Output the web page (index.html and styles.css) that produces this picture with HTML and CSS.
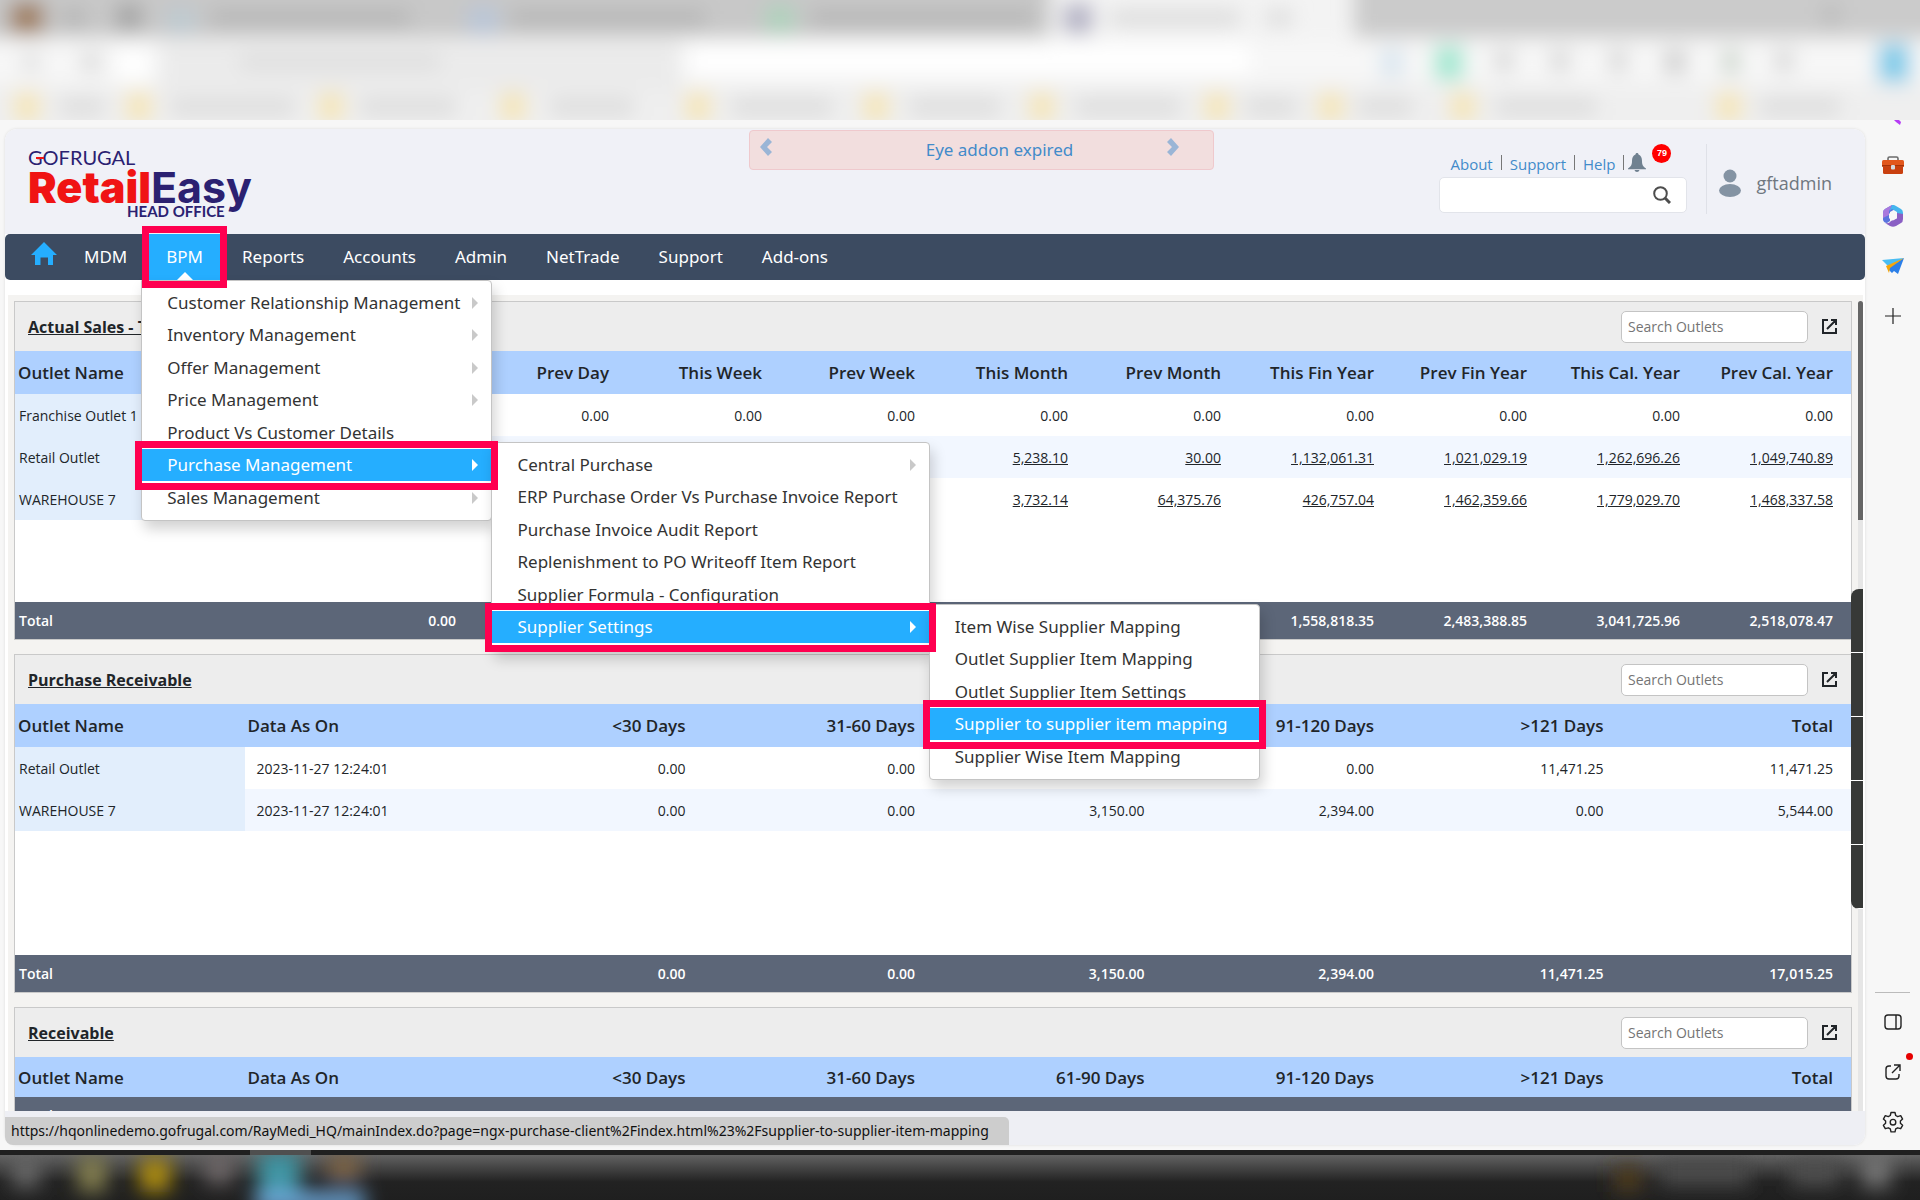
FILE: index.html
```html
<!DOCTYPE html>
<html lang="en">
<head>
  <meta charset="UTF-8" />
  <meta name="viewport" content="width=device-width, initial-scale=1" />
  <title>GOFRUGAL RetailEasy Head Office</title>
  <link rel="stylesheet" href="styles.css">
</head>
<body>
  <!-- browser toolbar, blurred out -->
  <svg class="browser-top" viewBox="0 0 1920 120" preserveAspectRatio="none" aria-hidden="true">
    <defs>
      <filter id="soft" x="-5%" y="-50%" width="110%" height="200%" filterUnits="objectBoundingBox">
        <feGaussianBlur stdDeviation="10" />
      </filter>
    </defs>
    <rect width="1920" height="120" fill="#f3f3f3" />
    <g filter="url(#soft)">
      <rect x="-60" y="-60" width="1110" height="98" fill="#c8c8c8" />
      <rect x="1354" y="-60" width="640" height="98" fill="#cbcbcb" />
      <rect x="-60" y="40" width="2060" height="42" fill="#f7f7f7" />
      <rect x="-60" y="84" width="2060" height="90" fill="#efefef" />
      <g fill="#b6b6b6">
        <rect x="210" y="10" width="200" height="16" />
        <rect x="510" y="10" width="195" height="16" />
        <rect x="810" y="10" width="225" height="16" />
        <rect x="62" y="8" width="24" height="20" />
        <rect x="116" y="4" width="26" height="26" fill="#a4a4a4" />
        <rect x="1824" y="6" width="14" height="18" />
      </g>
      <rect x="10" y="2" width="34" height="32" fill="#a07f60" />
      <rect x="168" y="8" width="26" height="24" fill="#bccad2" />
      <rect x="468" y="6" width="30" height="28" fill="#b9c6d8" />
      <rect x="765" y="4" width="30" height="30" fill="#b0d2bd" />
      <rect x="1064" y="4" width="28" height="30" fill="#b4b2c4" />
      <rect x="1110" y="10" width="130" height="16" fill="#dcdcdc" />
      <rect x="1266" y="10" width="26" height="16" fill="#dcdcdc" />
      <rect x="160" y="42" width="520" height="50" fill="#ebebeb" />
      <rect x="240" y="54" width="200" height="16" fill="#dedede" />
      <rect x="20" y="52" width="22" height="20" fill="#e3e3e3" />
      <rect x="80" y="52" width="22" height="20" fill="#dddddd" />
      <rect x="118" y="48" width="30" height="34" fill="#ffffff" />
      <rect x="690" y="44" width="560" height="30" fill="#ffffff" />
      <rect x="1380" y="48" width="24" height="30" fill="#dbe7f0" />
      <rect x="1434" y="46" width="30" height="34" fill="#a3e8d2" />
      <g fill="#d9d9d9">
        <rect x="1494" y="50" width="20" height="22" />
        <rect x="1550" y="50" width="20" height="22" />
        <rect x="1608" y="50" width="20" height="22" />
        <rect x="1664" y="50" width="22" height="24" fill="#cecece" />
        <rect x="1722" y="50" width="18" height="24" fill="#ccd6cc" />
        <rect x="1774" y="50" width="20" height="22" />
      </g>
      <rect x="1878" y="44" width="32" height="38" fill="#7dcbe9" />
      <g fill="#dddddd">
        <rect x="60" y="98" width="44" height="18" />
        <rect x="170" y="98" width="125" height="18" />
        <rect x="360" y="98" width="96" height="18" />
        <rect x="550" y="98" width="84" height="18" />
        <rect x="732" y="98" width="100" height="18" />
        <rect x="910" y="98" width="90" height="18" />
        <rect x="1076" y="98" width="104" height="18" />
        <rect x="1246" y="98" width="50" height="18" />
        <rect x="1358" y="98" width="54" height="18" />
        <rect x="1496" y="98" width="100" height="18" />
        <rect x="1760" y="98" width="80" height="18" />
      </g>
      <g fill="#f5e6b8">
        <rect x="14" y="92" width="26" height="30" />
        <rect x="126" y="92" width="26" height="30" />
        <rect x="318" y="92" width="26" height="30" />
        <rect x="500" y="92" width="26" height="30" />
        <rect x="685" y="92" width="26" height="30" />
        <rect x="863" y="92" width="26" height="30" />
        <rect x="1029" y="92" width="26" height="30" />
        <rect x="1204" y="92" width="26" height="30" />
        <rect x="1318" y="92" width="26" height="30" />
        <rect x="1450" y="92" width="26" height="30" />
        <rect x="1716" y="92" width="26" height="30" />
      </g>
    </g>
  </svg>

  <div class="window">
    <div class="app">
      <header class="header">
        <div class="logo">
          <span class="logo-top">GOFRUGAL</span>
          <span class="logo-main"><b>Retail</b>Easy</span>
          <span class="logo-sub">HEAD OFFICE</span>
        </div>
        <div class="alert">
          <button aria-label="Previous"><svg width="12" height="18" viewBox="0 0 12 18"><path d="M8 0l4 4-5 5 5 5-4 4-8-9z" fill="#9ab5d6" /></svg></button>
          <a href="#">Eye addon expired</a>
          <button aria-label="Next"><svg width="12" height="18" viewBox="0 0 12 18"><path d="M4 0L0 4l5 5-5 5 4 4 8-9z" fill="#9ab5d6" /></svg></button>
        </div>
        <div class="tools">
          <div class="tools-main">
            <div class="links">
              <a href="#">About</a>
              <a href="#">Support</a>
              <a href="#">Help</a>
              <button class="bell" aria-label="Notifications">
                <svg width="18" height="19" viewBox="0 0 18 19" fill="#708190"><path d="M9 0c1 0 1.500 .7 1.500 1.500C13 2.500 14 5 14 8c0 4 1 5.500 4 7.500v.8H0v-.8C3 13.500 4 12 4 8c0-3 1-5.500 3.500-6.500C7.500 .7 8 0 9 0zM6.500 17h5c-.4 1.200-1.300 2-2.500 2s-2.100-.8-2.500-2z" /></svg>
                <span class="badge">79</span>
              </button>
            </div>
            <div class="search">
              <input type="text" aria-label="Search">
              <svg width="18" height="18" viewBox="0 0 18 18" fill="none" stroke="#4d4d4d"><circle cx="7.500" cy="7.500" r="6.300" stroke-width="2" /><path d="M12 12l5 5" stroke-width="3" /></svg>
            </div>
          </div>
          <div class="user">
            <svg width="22" height="28" viewBox="0 0 22 28" fill="#8493a3"><circle cx="11" cy="7" r="6.500" /><ellipse cx="11" cy="21.500" rx="11" ry="6.500" /></svg>
            <span>gftadmin</span>
          </div>
        </div>
      </header>

      <nav>
        <ul class="nav">
          <li class="home"><a href="#" aria-label="Home"><svg width="26" height="24" viewBox="0 0 26 24" fill="#25aeff"><path d="M13 0l13 13h-4v10h-5v-7.500H9.500V23H4V13H0z" /></svg></a></li>
          <li><a href="#">MDM</a></li>
          <li class="active"><a href="#">BPM</a>
            <ul class="menu">
              <li class="more"><a href="#">Customer Relationship Management</a></li>
              <li class="more"><a href="#">Inventory Management</a></li>
              <li class="more"><a href="#">Offer Management</a></li>
              <li class="more"><a href="#">Price Management</a></li>
              <li><a href="#">Product Vs Customer Details</a></li>
              <li class="more active"><a href="#">Purchase Management</a>
                <ul class="menu">
                  <li class="more"><a href="#">Central Purchase</a></li>
                  <li><a href="#">ERP Purchase Order Vs Purchase Invoice Report</a></li>
                  <li><a href="#">Purchase Invoice Audit Report</a></li>
                  <li><a href="#">Replenishment to PO Writeoff Item Report</a></li>
                  <li><a href="#">Supplier Formula - Configuration</a></li>
                  <li class="more active"><a href="#">Supplier Settings</a>
                    <ul class="menu">
                      <li><a href="#">Item Wise Supplier Mapping</a></li>
                      <li><a href="#">Outlet Supplier Item Mapping</a></li>
                      <li><a href="#">Outlet Supplier Item Settings</a></li>
                      <li class="active"><a href="#">Supplier to supplier item mapping</a></li>
                      <li><a href="#">Supplier Wise Item Mapping</a></li>
                    </ul>
                  </li>
                </ul>
              </li>
              <li class="more"><a href="#">Sales Management</a></li>
            </ul>
          </li>
          <li><a href="#">Reports</a></li>
          <li><a href="#">Accounts</a></li>
          <li><a href="#">Admin</a></li>
          <li><a href="#">NetTrade</a></li>
          <li><a href="#">Support</a></li>
          <li><a href="#">Add-ons</a></li>
        </ul>
      </nav>

      <main class="content">
        <div class="panels">
          <section class="panel">
            <div class="panel-head">
              <h2>Actual Sales - Today</h2>
              <input type="text" placeholder="Search Outlets" aria-label="Search Outlets">
              <button aria-label="Open"><svg width="15" height="15" viewBox="0 0 15 15" fill="none" stroke="#212529" stroke-width="2"><path d="M6 1H1v13h13V9M9 1h5v5M14 1L5 10" /></svg></button>
            </div>
            <table class="tall">
              <thead>
                <tr><th>Outlet Name</th><th>Data As On</th><th>Today</th><th>Prev Day</th><th>This Week</th><th>Prev Week</th><th>This Month</th><th>Prev Month</th><th>This Fin Year</th><th>Prev Fin Year</th><th>This Cal. Year</th><th>Prev Cal. Year</th></tr>
              </thead>
              <tbody>
                <tr><td>Franchise Outlet 1</td><td></td><td>0.00</td><td>0.00</td><td>0.00</td><td>0.00</td><td>0.00</td><td>0.00</td><td>0.00</td><td>0.00</td><td>0.00</td><td>0.00</td></tr>
                <tr><td>Retail Outlet</td><td></td><td>0.00</td><td>0.00</td><td>0.00</td><td>0.00</td><td><a href="#">5,238.10</a></td><td><a href="#">30.00</a></td><td><a href="#">1,132,061.31</a></td><td><a href="#">1,021,029.19</a></td><td><a href="#">1,262,696.26</a></td><td><a href="#">1,049,740.89</a></td></tr>
                <tr><td>WAREHOUSE 7</td><td></td><td>0.00</td><td>0.00</td><td>0.00</td><td>0.00</td><td><a href="#">3,732.14</a></td><td><a href="#">64,375.76</a></td><td><a href="#">426,757.04</a></td><td><a href="#">1,462,359.66</a></td><td><a href="#">1,779,029.70</a></td><td><a href="#">1,468,337.58</a></td></tr>
                <tr class="filler"><td colspan="12"></td></tr>
              </tbody>
              <tfoot>
                <tr><td>Total</td><td></td><td>0.00</td><td>0.00</td><td>0.00</td><td>0.00</td><td>8,970.24</td><td>64,405.76</td><td>1,558,818.35</td><td>2,483,388.85</td><td>3,041,725.96</td><td>2,518,078.47</td></tr>
              </tfoot>
            </table>
          </section>

          <section class="panel">
            <div class="panel-head">
              <h2>Purchase Receivable</h2>
              <input type="text" placeholder="Search Outlets" aria-label="Search Outlets">
              <button aria-label="Open"><svg width="15" height="15" viewBox="0 0 15 15" fill="none" stroke="#212529" stroke-width="2"><path d="M6 1H1v13h13V9M9 1h5v5M14 1L5 10" /></svg></button>
            </div>
            <table class="tall">
              <thead>
                <tr><th>Outlet Name</th><th>Data As On</th><th>&lt;30 Days</th><th>31-60 Days</th><th>61-90 Days</th><th>91-120 Days</th><th>&gt;121 Days</th><th>Total</th></tr>
              </thead>
              <tbody>
                <tr><td>Retail Outlet</td><td>2023-11-27 12:24:01</td><td>0.00</td><td>0.00</td><td>0.00</td><td>0.00</td><td>11,471.25</td><td>11,471.25</td></tr>
                <tr><td>WAREHOUSE 7</td><td>2023-11-27 12:24:01</td><td>0.00</td><td>0.00</td><td>3,150.00</td><td>2,394.00</td><td>0.00</td><td>5,544.00</td></tr>
                <tr class="filler"><td colspan="8"></td></tr>
              </tbody>
              <tfoot>
                <tr><td>Total</td><td></td><td>0.00</td><td>0.00</td><td>3,150.00</td><td>2,394.00</td><td>11,471.25</td><td>17,015.25</td></tr>
              </tfoot>
            </table>
          </section>

          <section class="panel">
            <div class="panel-head">
              <h2>Receivable</h2>
              <input type="text" placeholder="Search Outlets" aria-label="Search Outlets">
              <button aria-label="Open"><svg width="15" height="15" viewBox="0 0 15 15" fill="none" stroke="#212529" stroke-width="2"><path d="M6 1H1v13h13V9M9 1h5v5M14 1L5 10" /></svg></button>
            </div>
            <table>
              <thead>
                <tr><th>Outlet Name</th><th>Data As On</th><th>&lt;30 Days</th><th>31-60 Days</th><th>61-90 Days</th><th>91-120 Days</th><th>&gt;121 Days</th><th>Total</th></tr>
              </thead>
              <tfoot>
                <tr><td>Total</td><td></td><td>497.00</td><td>0.00</td><td>22,217.00</td><td>2,239.00</td><td>479,224.00</td><td>310,968.23</td></tr>
              </tfoot>
            </table>
          </section>
        </div>
        <div class="scrollbar"></div>
      </main>
      <div class="side-tabs"><i></i><i></i><i></i><i></i><i></i></div>

      <footer class="footer">
        <div class="status">https://hqonlinedemo.gofrugal.com/RayMedi_HQ/mainIndex.do?page=ngx-purchase-client%2Findex.html%23%2Fsupplier-to-supplier-item-mapping</div>
      </footer>
    </div>

    <aside class="sidebar">
      <svg width="22" height="5" viewBox="0 0 22 5"><path d="M12 0h5l2 2-1 3-4-3z" fill="#b63cf5" /></svg>
      <button aria-label="Tools"><svg width="24" height="20" viewBox="0 0 24 20"><path d="M7 5V2.500Q7 1 8.500 1h7Q17 1 17 2.500V5" fill="none" stroke="#6b6b6b" stroke-width="1.600" /><rect x="2" y="9" width="20" height="9" rx="1.500" fill="#c9400f" /><rect x="1" y="4" width="22" height="7" rx="1.500" fill="#e2571c" /><path d="M1 9h22v1.500H1z" fill="#a83208" /><rect x="10" y="9" width="4" height="4.500" rx="1" fill="#d5dbe0" /></svg></button>
      <button aria-label="Microsoft 365"><svg width="22" height="22" viewBox="0 0 22 22"><path d="M10 0L3 4Q1 5 1 8v7q1 3 4 3l3-2V7l7-4z" fill="#5b74de" /><path d="M10 0q2-.5 4 1l5 3q2 1 2 4v6l-6-4V7l-5-3-3 2z" fill="#45b5ee" /><path d="M10 0L3 4Q1 5 1 8v5l6-3V6z" fill="#a979dd" /><path d="M21 9v5q0 3-2 4l-5 3q-3 1.500-6 0l-5-3q4 1 6-2l6-3V8z" fill="#8a5fc4" /><path d="M11 6.500l4 2.200v4.600l-4 2.200-4-2.200V8.700z" fill="#f7f7f7" /></svg></button>
      <button aria-label="Drop"><svg width="22" height="16" viewBox="0 0 22 16"><path d="M0 2L22 0 7 9z" fill="#49bdf3" /><path d="M22 0L16 16l-4-3-2 2-3-3V9z" fill="#2b7fe8" /><path d="M22 0L4 8l3 7 1-5z" fill="#f5a60a" /></svg></button>
      <button aria-label="Add"><svg width="16" height="16" viewBox="0 0 16 16" stroke="#222" stroke-width="1.200"><path d="M8 0v16M0 8h16" /></svg></button>
      <hr>
      <button aria-label="Split"><svg width="18" height="16" viewBox="0 0 18 16" fill="none" stroke="#222" stroke-width="1.400"><rect x="1" y="1" width="16" height="14" rx="3" /><path d="M12 1v14" /></svg></button>
      <button class="dot" aria-label="Open externally"><svg width="16" height="16" viewBox="0 0 16 16" fill="none" stroke="#222" stroke-width="1.400"><path d="M6 2H4Q1 2 1 5v7q0 3 3 3h7q3 0 3-3v-2M9 1h6v6M15 1L7 9" /></svg></button>
      <button aria-label="Settings"><svg width="22" height="22" viewBox="0 0 22 22" fill="none" stroke="#222" stroke-width="1.400" stroke-linejoin="round"><path d="M9 1.500h4l.7 3 2 1.100 3-.9 1.900 3.400-2.200 2v2.200l2.200 2-1.900 3.400-3-.9-2 1.100-.7 3H9l-.7-3-2-1.100-3 .9-1.900-3.400 2.200-2v-2.200l-2.200-2 1.900-3.400 3 .9 2-1.100z" /><circle cx="11" cy="11.200" r="2.800" /></svg></button>
    </aside>
  </div>

  <!-- system taskbar, blurred out -->
  <svg class="taskbar" viewBox="0 0 1920 50" preserveAspectRatio="none" aria-hidden="true">
    <defs>
      <linearGradient id="bar" x1="0" y1="0" x2="0" y2="1">
        <stop offset="0" stop-color="#626262" />
        <stop offset=".6" stop-color="#222222" />
        <stop offset="1" stop-color="#1f1f1f" />
      </linearGradient>
      <clipPath id="strip"><rect y="5" width="1920" height="45" /></clipPath>
    </defs>
    <rect width="1920" height="5" fill="#202020" />
    <rect x="250" width="61" height="5" fill="#4f4f4f" />
    <rect y="5" width="1920" height="45" fill="url(#bar)" />
    <g clip-path="url(#strip)"><g filter="url(#soft)">
      <rect x="12" y="4" width="28" height="34" fill="#666666" />
      <rect x="78" y="6" width="28" height="36" fill="#85804f" />
      <rect x="140" y="8" width="30" height="34" fill="#b08f10" />
      <rect x="205" y="2" width="28" height="32" fill="#6d6668" />
      <rect x="258" y="2" width="42" height="42" fill="#3f96a5" />
      <rect x="328" y="4" width="32" height="26" fill="#7f6546" />
      <rect x="255" y="42" width="110" height="20" fill="#6ea9dc" />
      <rect x="1614" y="16" width="28" height="26" fill="#4f3d22" />
      <rect x="1660" y="10" width="90" height="26" fill="#4b4b4b" />
      <rect x="1790" y="10" width="50" height="26" fill="#505050" />
      <rect x="1862" y="4" width="28" height="34" fill="#777777" />
    </g></g>
  </svg>
</body>
</html>
```
FILE: styles.css
```css
* {
  box-sizing: border-box;
}

body {
  margin: 0;
  height: 100vh;
  display: flex;
  flex-direction: column;
  overflow: hidden;
  background: #f7f7f7;
  font-family: "Open Sans", "Noto Sans", sans-serif;
  font-size: 14px;
  color: #212529;
}

button {
  display: flex;
  padding: 0;
  border: none;
  background: none;
  cursor: pointer;
}

a {
  color: inherit;
  text-decoration: none;
}

ul {
  margin: 0;
  padding: 0;
  list-style: none;
}

.browser-top {
  flex: none;
  width: 100%;
  height: 120px;
}

.taskbar {
  flex: none;
  width: 100%;
  height: 50px;
}

.window {
  flex: 1;
  min-height: 0;
  display: flex;
}

.app {
  position: relative;
  flex: 1;
  min-width: 0;
  margin: 9px 0 5px 5px;
  display: flex;
  flex-direction: column;
  background: #fff;
  border-radius: 12px;
  box-shadow: 0 0 2px 1px #e9e9e9;
}

/* header */
.header {
  height: 105px;
  flex: none;
  display: flex;
  align-items: flex-start;
  background: #f0f1f7;
  border-radius: 12px 12px 0 0;
}

.logo {
  flex: 0 0 40%;
  display: flex;
  flex-direction: column;
  padding: 18px 0 0 23px;
  color: #2b2171;
}

.logo-top {
  position: relative;
  font: 400 20px/20px Lato, sans-serif;
}

/* red bar of the G */
.logo-top::after {
  content: "";
  position: absolute;
  left: 8px;
  top: 10px;
  width: 8px;
  height: 2px;
  background: #f01414;
}

.logo-main {
  font: 700 43px/40px Inter, sans-serif;
}

.logo-main b {
  color: #f01414;
}

.logo-sub {
  padding-left: 99px;
  font: 700 15px/9px Lato, sans-serif;
}

.alert {
  flex: 0 0 25%;
  display: flex;
  align-items: flex-start;
  justify-content: space-between;
  height: 40px;
  margin-top: 1px;
  padding: 7px 34px 0 10px;
  border: 1px solid #efc9cd;
  border-radius: 4px;
  background: #f2dede;
}

.alert a {
  padding-left: 60px;
  font-family: "Noto Sans", sans-serif;
  font-size: 17px;
  line-height: 24px;
  color: #428bca;
}

.tools {
  flex: 1;
  display: flex;
  justify-content: flex-end;
  padding: 15px 33px 0 0;
}

.tools-main {
  width: 248px;
  padding-top: 11px;
}

.links {
  display: flex;
  height: 22px;
  padding-left: 11px;
}

.links a {
  height: 15px;
  padding-right: 8px;
  margin-right: 8px;
  border-right: 1px solid #777;
  font-size: 15px;
  line-height: 18px;
  color: #428bca;
}

.links .bell {
  position: relative;
  margin-left: -4px;
  margin-top: -2px;
}

.badge {
  position: absolute;
  left: 24px;
  top: -9px;
  width: 19px;
  border-radius: 50%;
  background: #f00;
  color: #fff;
  font-size: 9px;
  font-weight: 700;
  line-height: 19px;
  text-align: center;
}

.search {
  display: flex;
  align-items: center;
  height: 36px;
  padding-right: 15px;
  background: #fff;
  border: 1px solid #e2e4ea;
  border-radius: 5px;
}

.search input {
  flex: 1;
  min-width: 0;
  border: none;
  background: none;
}

.user {
  display: flex;
  align-items: center;
  gap: 15px;
  height: 70px;
  margin-left: 19px;
  padding: 8px 0 0 12px;
  border-left: 1px solid #dfe1e8;
  font-size: 18px;
  color: #6f7780;
}

/* navigation */
.nav {
  display: flex;
  height: 46px;
  padding-left: 24px;
  background: #3c4b61;
  border-radius: 5px;
  font-family: "Noto Sans", sans-serif;
}

.nav > li {
  position: relative;
  margin: 0 3px 0 2px;
}

.nav > li > a {
  display: block;
  padding: 0 17px;
  font-size: 17px;
  line-height: 45px;
  color: #fff;
}

.nav > .home > a {
  padding: 0 5px 0 0;
}

.home svg {
  margin-top: 8px;
  vertical-align: top;
}

.nav > .active {
  background: #25aeff;
}

/* pointer under the open tab */
.nav > .active > a::after {
  content: "";
  position: absolute;
  left: 50%;
  bottom: 0;
  margin-left: -8px;
  border: 8px solid transparent;
  border-top: none;
  border-bottom-color: #fff;
}

.menu {
  position: absolute;
  z-index: 2;
  top: -7px;
  left: 100%;
  padding: 6px 0;
  background: #fff;
  border: 1px solid #c4c4c4;
  border-radius: 0 4px 4px 4px;
  box-shadow: 3px 8px 14px rgba(0, 0, 0, 0.18);
  white-space: nowrap;
}

.nav > li > .menu {
  top: 46px;
  left: -8px;
}

.menu li {
  position: relative;
}

.menu li:nth-child(even) {
  padding-bottom: 1px;
}

.menu a {
  display: block;
  padding: 0 31px 0 25px;
  font-size: 17px;
  line-height: 32px;
  color: #333;
}

.menu .more > a::after {
  content: "";
  position: absolute;
  right: 13px;
  top: 10px;
  border: 6px solid transparent;
  border-right: none;
  border-left-color: #c9c9c9;
}

.menu .active > a {
  background: #25aeff;
  color: #fff;
}

.menu .active.more > a::after {
  border-left-color: #fff;
}

/* highlight frames */
.nav .active::after {
  content: "";
  position: absolute;
  z-index: 3;
  inset: -8px -7px;
  border: 7px solid #ff0050;
  pointer-events: none;
}

/* dashboard */
.content {
  flex: 1;
  min-height: 0;
  display: flex;
  gap: 6px;
  overflow: hidden;
  margin: 15px 2px 0 3px;
  padding: 6px 0 0 6px;
  background: #f4f3f1;
}

.panels {
  flex: 1;
}

.scrollbar {
  width: 5px;
  background: linear-gradient(#666 219px, #e6e6e6 219px);
  border-radius: 3px 3px 0 0;
}

.side-tabs {
  position: absolute;
  right: 2px;
  top: 460px;
  width: 12px;
  overflow: hidden;
  border-radius: 8px 0 0 8px;
}

.side-tabs i {
  display: block;
  height: 64px;
  background: #373937;
  border-bottom: 1px solid #fff;
}

.panel {
  margin-bottom: 14px;
  border: 1px solid #c9c9c9;
}

.panel-head {
  display: flex;
  align-items: center;
  height: 49px;
  padding: 0 14px 0 13px;
  background: #ededed;
}

.panel-head h2 {
  margin: 0 auto 0 0;
  font-size: 16px;
  font-weight: 700;
  line-height: 24px;
  text-decoration: underline;
}

.panel-head input {
  width: 187px;
  height: 32px;
  margin-right: 14px;
  padding: 0 6px;
  border: 1px solid #c4c4c4;
  border-radius: 5px;
  background: #fff;
  font: 14px "Open Sans", sans-serif;
}

.panel-head input::placeholder {
  color: #757575;
}

table {
  width: 100%;
  table-layout: fixed;
  border-collapse: collapse;
  background: #fff;
}

table.tall {
  height: 288px;
}

th, td {
  height: 42px;
  padding: 0 18px 0 0;
  text-align: right;
  white-space: nowrap;
}

th {
  height: 40px;
  background: #aed0ff;
  font-size: 17px;
  font-weight: 600;
}

.tall th {
  height: 43px;
}

th:nth-child(1), th:nth-child(2) {
  padding-left: 3px;
  text-align: left;
}

td:nth-child(1), td:nth-child(2) {
  padding: 0 0 0 4px;
  text-align: left;
}

td:nth-child(2) {
  padding-left: 12px;
}

tbody tr:nth-child(even) {
  background: #f2f7ff;
}

tbody td:first-child {
  background: #e2eefc;
}

td a {
  text-decoration: underline;
}

tbody .filler td {
  height: auto;
  background: #fff;
}

tfoot td {
  height: 37px;
  background: #5c6678;
  color: #fff;
  font-weight: 600;
}

.footer {
  flex: none;
  display: flex;
  align-items: flex-end;
  height: 34px;
  background: #eeeff4;
  border-radius: 0 0 12px 12px;
}

.status {
  height: 28px;
  padding: 0 20px 0 6px;
  background: #cdcdcd;
  border-radius: 0 5px 0 8px;
  font-family: "Noto Sans", sans-serif;
  font-size: 14px;
  line-height: 28px;
  color: #111;
}

/* browser side bar */
.sidebar {
  width: 55px;
  flex: none;
  display: flex;
  flex-direction: column;
  align-items: center;
  padding-bottom: 3px;
}

.sidebar button {
  position: relative;
  align-items: center;
  height: 50px;
}

.sidebar svg {
  flex: none;
}

.sidebar > svg {
  margin-bottom: 16px;
}

.sidebar hr {
  width: 35px;
  margin: auto 0 4px;
  border: none;
  border-top: 1px solid #bbb;
}

.sidebar .dot::after {
  content: "";
  position: absolute;
  top: 6px;
  right: -12px;
  width: 7px;
  height: 7px;
  border-radius: 50%;
  background: #e60000;
}
```
